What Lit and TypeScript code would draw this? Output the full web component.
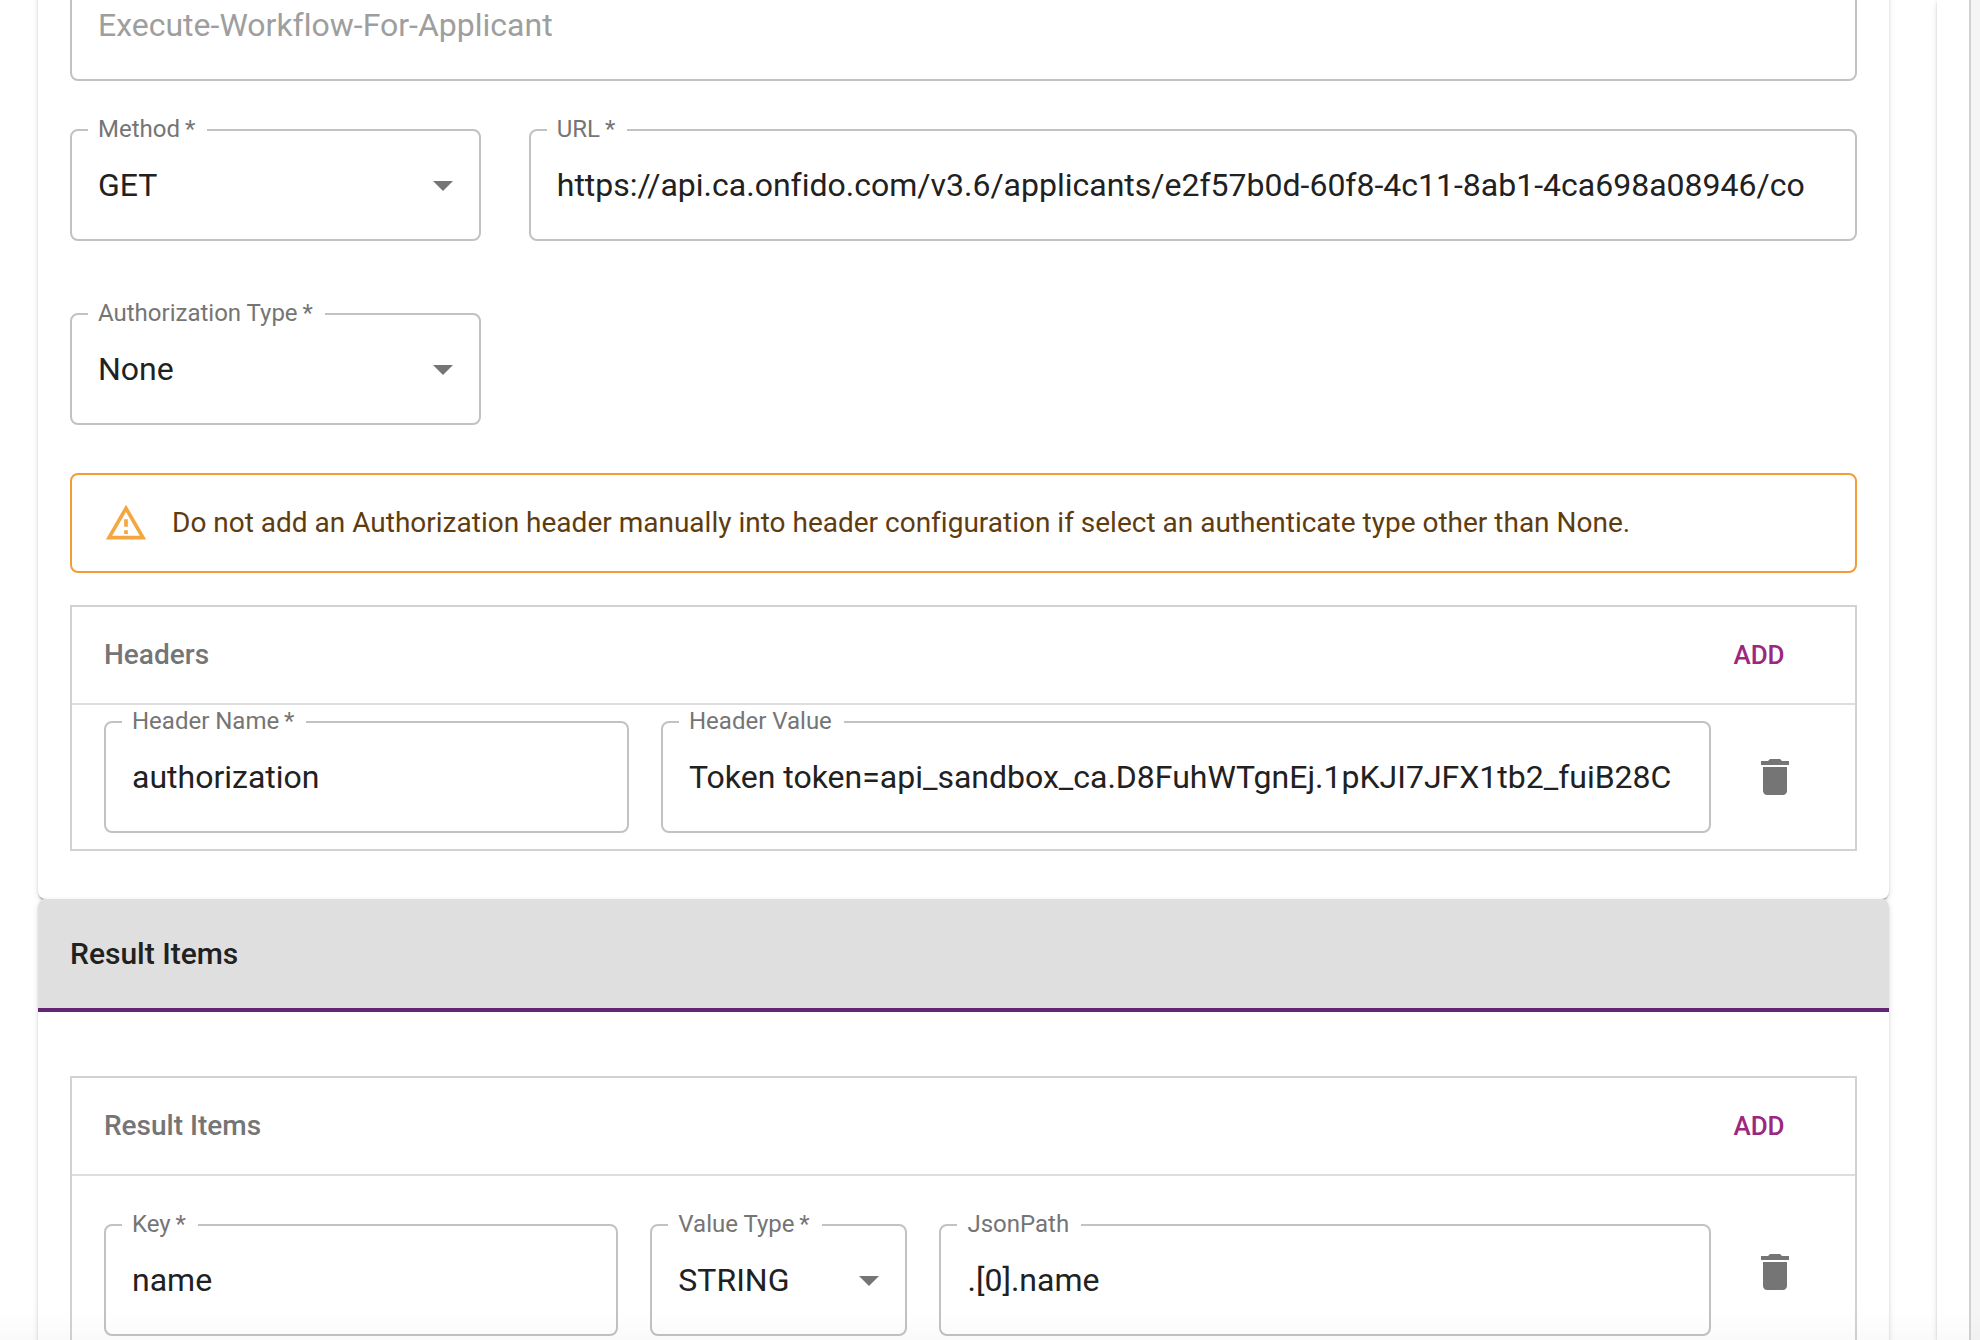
import { LitElement, html, css, svg, nothing } from "lit";
import { customElement, property } from "lit/decorators.js";

const arrowPath = svg`<path d="M7 10l5 5 5-5z"></path>`;
const deletePath = svg`<path d="M6 19c0 1.1.9 2 2 2h8c1.1 0 2-.9 2-2V7H6v12zM19 4h-3.5l-1-1h-5l-1 1H5v2h14V4z"></path>`;
const warningPath = svg`<path d="M12 5.99L19.53 19H4.47L12 5.99M12 2L1 21h22L12 2zm1 14h-2v2h2v-2zm0-6h-2v4h2v-4z"></path>`;

/** Outlined text box or drop-down whose label sits in the border. */
@customElement("outlined-field")
export class OutlinedField extends LitElement {
  @property() label = "";
  @property() value = "";
  @property({ type: Boolean }) required = false;
  @property({ type: Boolean }) disabled = false;
  @property({ type: Boolean }) select = false;

  static styles = css`
    :host {
      display: block;
      min-width: 0;
    }
    .field {
      position: relative;
      box-sizing: border-box;
      border: 2px solid #c2c2c2;
      border-radius: 8px;
    }
    .label {
      position: absolute;
      top: -16px;
      left: 16px;
      padding: 0 12px 0 10px;
      background: #fff;
      color: #757575;
      font-size: 24px;
      line-height: 28px;
      white-space: nowrap;
    }
    .control {
      display: block;
      box-sizing: border-box;
      width: 100%;
      height: 108px;
      margin: 0;
      padding: 0;
      border: 26px solid transparent;
      border-width: 0 26px;
      background: transparent;
      color: #212121;
      font: inherit;
      font-size: 32px;
      font-variant-ligatures: none;
      outline: none;
      appearance: none;
    }
    .field:focus-within {
      border-color: #652575;
    }
    .control:disabled {
      color: #9e9e9e;
      opacity: 1;
    }
    .arrow {
      position: absolute;
      top: 30px;
      right: 12px;
      width: 48px;
      height: 48px;
      fill: #757575;
      pointer-events: none;
    }
  `;

  render() {
    return html`
      <div class="field">
        ${this.select
          ? html`<select class="control" id="control">
                <option>${this.value}</option>
              </select>
              <svg class="arrow" viewBox="0 0 24 24" aria-hidden="true">${arrowPath}</svg>`
          : html`<input
              class="control"
              id="control"
              type="text"
              aria-label=${this.label ? nothing : "Name"}
              .value=${this.value}
              ?disabled=${this.disabled}
            />`}
        ${this.label
          ? html`<label class="label" for="control"
              >${this.label}${this.required ? "\u2009*" : nothing}</label
            >`
          : nothing}
      </div>
    `;
  }
}

@customElement("app-root")
export class AppRoot extends LitElement {
  static styles = css`
    :host {
      display: block;
      font-family: Roboto, "Liberation Sans", sans-serif;
      font-variant-ligatures: none;
      color: #212121;
    }
    .viewport {
      position: relative;
      display: flex;
      height: 100vh;
      overflow: hidden;
      background: #fff;
    }
    /* Faint shade over the bottom edge of the scroll area. */
    .viewport::after {
      content: "";
      position: absolute;
      right: 0;
      bottom: 0;
      left: 0;
      height: 32px;
      background: linear-gradient(rgba(0, 0, 0, 0), rgba(0, 0, 0, 0.02));
      pointer-events: none;
    }
    .page {
      flex: 1;
      min-width: 0;
      padding: 0 48px 0 38px;
    }
    .side {
      flex: none;
      width: 32px;
      background: #fff;
      box-shadow: 0 2px 2px rgba(0, 0, 0, 0.14), 0 2px 6px rgba(0, 0, 0, 0.12);
    }
    .track {
      position: relative;
      flex: none;
      box-sizing: border-box;
      width: 11px;
      border-left: 2px solid #d2d2d2;
      background: #f5f5f5;
    }
    .card {
      border-radius: 8px;
      background: #fff;
      box-shadow: 0 4px 2px -2px rgba(0, 0, 0, 0.2),
        0 2px 2px 0 rgba(0, 0, 0, 0.14), 0 2px 6px 0 rgba(0, 0, 0, 0.12);
    }
    /* The form is scrolled so that its first field is cut by the top edge. */
    .scrolled {
      margin-top: -31px;
    }
    .body {
      padding: 0 32px 48px;
    }
    .grid {
      display: grid;
      grid-template-columns: repeat(12, minmax(0, 1fr));
      column-gap: 48px;
      row-gap: 72px;
      margin: 48px 0;
    }
    .narrow {
      grid-column: 1 / span 3;
    }
    .wide {
      grid-column: span 9;
    }
    .alert {
      display: flex;
      align-items: center;
      gap: 24px;
      box-sizing: border-box;
      min-height: 100px;
      margin-bottom: 32px;
      padding: 12px 32px;
      border: 2px solid #f29d38;
      border-radius: 8px;
      color: #5f3c10;
      font-size: 28px;
      line-height: 40px;
    }
    .alert-icon {
      flex: none;
      width: 44px;
      height: 44px;
      fill: #f4a640;
    }
    .panel {
      border: 2px solid #d2d2d2;
    }
    .panel-head {
      display: flex;
      align-items: center;
      justify-content: space-between;
      height: 96px;
      padding: 0 32px;
      border-bottom: 2px solid #dedede;
    }
    .panel-title {
      margin: 0;
      color: #757575;
      font-size: 28px;
      font-weight: 500;
      line-height: 40px;
    }
    .add {
      min-width: 128px;
      height: 60px;
      padding: 0;
      border: 0;
      background: none;
      color: #9c2780;
      font: inherit;
      font-size: 26px;
      font-weight: 500;
      cursor: pointer;
    }
    .row {
      display: grid;
      gap: 32px;
      padding: 16px 32px;
    }
    .header-row {
      grid-template-columns: minmax(0, 1fr) minmax(0, 2fr) 80px;
      align-items: center;
    }
    .result-row {
      grid-template-columns: minmax(0, 2fr) minmax(0, 1fr) minmax(0, 3fr) 80px;
      align-items: start;
      padding: 48px 32px;
    }
    .delete {
      display: flex;
      align-items: center;
      justify-content: center;
      width: 64px;
      height: 96px;
      padding: 0;
      border: 0;
      background: none;
      cursor: pointer;
    }
    .delete-icon {
      width: 48px;
      height: 48px;
      fill: #757575;
    }
    .section-head {
      padding: 32px;
      border-bottom: 4px solid #652575;
      border-radius: 8px 8px 0 0;
      background: #dfdfdf;
    }
    .section-title {
      margin: 0;
      font-size: 30px;
      font-weight: 500;
      line-height: 45px;
    }
    .result-body {
      padding: 64px 32px;
    }
  `;

  private panelHead(title: string) {
    return html`<div class="panel-head">
      <h3 class="panel-title">${title}</h3>
      <button class="add" type="button">ADD</button>
    </div>`;
  }

  private deleteButton() {
    return html`<button class="delete" type="button" aria-label="Delete">
      <svg class="delete-icon" viewBox="0 0 24 24" aria-hidden="true">${deletePath}</svg>
    </button>`;
  }

  render() {
    return html`
      <div class="viewport">
        <main class="page">
          <section class="card scrolled">
            <div class="body">
              <outlined-field value="Execute-Workflow-For-Applicant" disabled></outlined-field>
              <div class="grid">
                <outlined-field class="narrow" label="Method" value="GET" required select></outlined-field>
                <outlined-field
                  class="wide"
                  label="URL"
                  value="https://api.ca.onfido.com/v3.6/applicants/e2f57b0d-60f8-4c11-8ab1-4ca698a08946/co"
                  required
                ></outlined-field>
                <outlined-field
                  class="narrow"
                  label="Authorization Type"
                  value="None"
                  required
                  select
                ></outlined-field>
              </div>
              <div class="alert" role="alert">
                <svg class="alert-icon" viewBox="0 0 24 24" aria-hidden="true">${warningPath}</svg>
                <span
                  >Do not add an Authorization header manually into header configuration if select an
                  authenticate type other than None.</span
                >
              </div>
              <div class="panel">
                ${this.panelHead("Headers")}
                <div class="row header-row">
                  <outlined-field label="Header Name" value="authorization" required></outlined-field>
                  <outlined-field
                    label="Header Value"
                    value="Token token=api_sandbox_ca.D8FuhWTgnEj.1pKJI7JFX1tb2_fuiB28C"
                  ></outlined-field>
                  ${this.deleteButton()}
                </div>
              </div>
            </div>
          </section>
          <section class="card">
            <div class="section-head">
              <h2 class="section-title">Result Items</h2>
            </div>
            <div class="result-body">
              <div class="panel">
                ${this.panelHead("Result Items")}
                <div class="row result-row">
                  <outlined-field label="Key" value="name" required></outlined-field>
                  <outlined-field label="Value Type" value="STRING" required select></outlined-field>
                  <outlined-field label="JsonPath" value=".[0].name"></outlined-field>
                  ${this.deleteButton()}
                </div>
              </div>
            </div>
          </section>
        </main>
        <div class="side"></div>
        <div class="track"></div>
      </div>
    `;
  }
}
